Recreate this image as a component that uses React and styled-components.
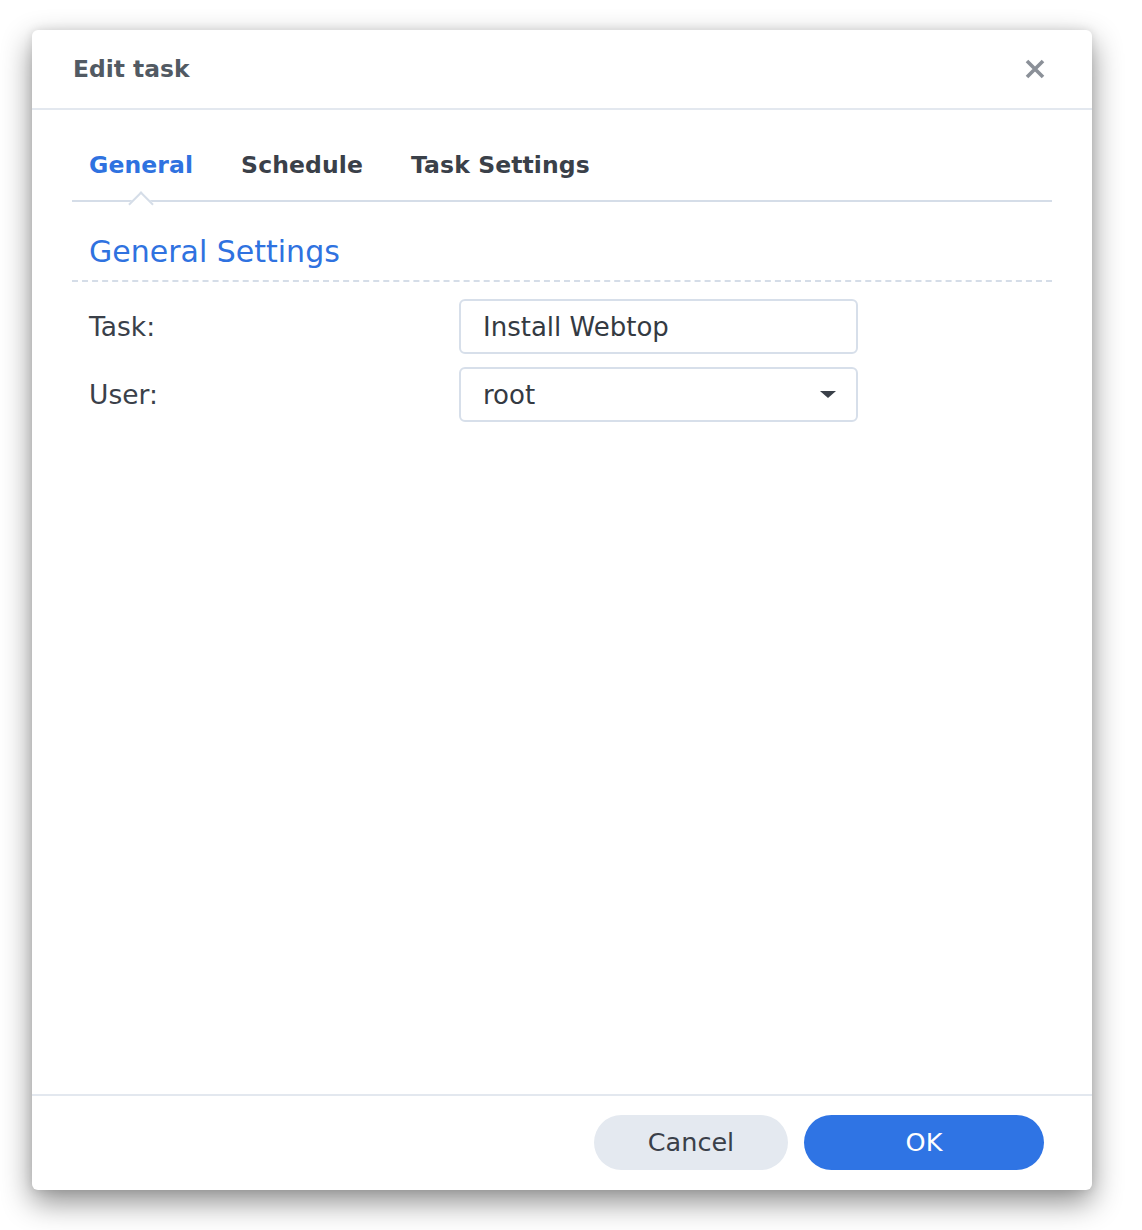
import React from "react";
import styled, { createGlobalStyle } from "styled-components";

const GlobalStyle = createGlobalStyle`
  html, body {
    margin: 0;
    padding: 0;
    background: #ffffff;
    font-family: "DejaVu Sans", Verdana, sans-serif;
  }
`;

const Page = styled.div`
  padding: 30px 50px 40px 32px;
`;

const Dialog = styled.div`
  width: 1060px;
  height: 1160px;
  background: #ffffff;
  border-radius: 6px;
  box-shadow: 0 12px 30px rgba(0, 0, 0, 0.45), 0 0 10px rgba(0, 0, 0, 0.1);
  display: flex;
  flex-direction: column;
`;

const Header = styled.div`
  height: 78px;
  display: flex;
  align-items: center;
  justify-content: space-between;
  padding: 0 44px 0 41px;
  border-bottom: 2px solid #e3e8ef;
`;

const Title = styled.h1`
  margin: 0;
  font-size: 23.4px;
  font-weight: bold;
  color: #525a63;
`;

const CloseButton = styled.button`
  border: none;
  background: none;
  padding: 0;
  width: 26px;
  height: 26px;
  display: flex;
  align-items: center;
  justify-content: center;
  cursor: pointer;
`;

const Body = styled.div`
  flex: 1;
  padding: 0 40px;
`;

const TabBar = styled.div`
  display: flex;
  gap: 48px;
  padding: 0 17px;
  height: 92px;
  align-items: center;
  border-bottom: 2px solid #d5dde8;
  box-sizing: border-box;
`;

const Tab = styled.button`
  position: relative;
  border: none;
  background: none;
  padding: 0;
  margin-top: 20px;
  font-family: inherit;
  font-size: 23.5px;
  letter-spacing: 0.1px;
  font-weight: bold;
  color: ${props => (props.active ? "#2f72e0" : "#3a4049")};
  cursor: pointer;
`;

const TabArrow = styled.span`
  position: absolute;
  left: 50%;
  bottom: -34px;
  width: 16px;
  height: 16px;
  margin-left: -9px;
  background: #ffffff;
  border-left: 2px solid #d5dde8;
  border-top: 2px solid #d5dde8;
  transform: rotate(45deg);
`;

const SectionTitle = styled.h2`
  margin: 0;
  padding: 30px 17px 8px;
  font-size: 30px;
  line-height: 40px;
  font-weight: normal;
  color: #2f72e0;
  border-bottom: 2px dashed #d5dde8;
`;

const Form = styled.div`
  display: flex;
  flex-direction: column;
  gap: 13px;
  padding-top: 17px;
`;

const Row = styled.div`
  display: grid;
  grid-template-columns: 370px 399px;
  align-items: center;
  padding-left: 17px;
`;

const Label = styled.label`
  font-size: 26.5px;
  color: #3a4049;
`;

const Field = styled.div`
  height: 55px;
  box-sizing: border-box;
  border: 2px solid #d7dfea;
  border-radius: 6px;
  display: flex;
  align-items: center;
  justify-content: space-between;
  padding: 0 20px 0 22px;
  font-size: 26px;
  color: #343a42;
`;

const Caret = styled.span`
  width: 0;
  height: 0;
  border-left: 8px solid transparent;
  border-right: 8px solid transparent;
  border-top: 7px solid #3a4049;
`;

const Footer = styled.div`
  height: 96px;
  box-sizing: border-box;
  border-top: 2px solid #e3e8ef;
  display: flex;
  align-items: center;
  justify-content: flex-end;
  gap: 16px;
  padding: 0 48px 2px 0;
`;

const Button = styled.button`
  height: 55px;
  width: ${props => props.width}px;
  border: none;
  border-radius: 28px;
  font-family: inherit;
  font-size: 25.5px;
  background: ${props => (props.primary ? "#2f74e4" : "#e4e9f0")};
  color: ${props => (props.primary ? "#ffffff" : "#3a4049")};
  cursor: pointer;
`;

export default function App() {
  return (
    <Page>
      <GlobalStyle />
      <Dialog>
        <Header>
          <Title>Edit task</Title>
          <CloseButton aria-label="Close">
            <svg width="22" height="22" viewBox="0 0 22 22">
              <path d="M3 3 L19 19 M19 3 L3 19" stroke="#8b9098" strokeWidth="3.6" strokeLinecap="butt" />
            </svg>
          </CloseButton>
        </Header>
        <Body>
          <TabBar>
            <Tab active>
              General
              <TabArrow />
            </Tab>
            <Tab>Schedule</Tab>
            <Tab>Task Settings</Tab>
          </TabBar>
          <SectionTitle>General Settings</SectionTitle>
          <Form>
            <Row>
              <Label>Task:</Label>
              <Field>Install Webtop</Field>
            </Row>
            <Row>
              <Label>User:</Label>
              <Field>
                root
                <Caret />
              </Field>
            </Row>
          </Form>
        </Body>
        <Footer>
          <Button width={194}>Cancel</Button>
          <Button width={240} primary>OK</Button>
        </Footer>
      </Dialog>
    </Page>
  );
}
